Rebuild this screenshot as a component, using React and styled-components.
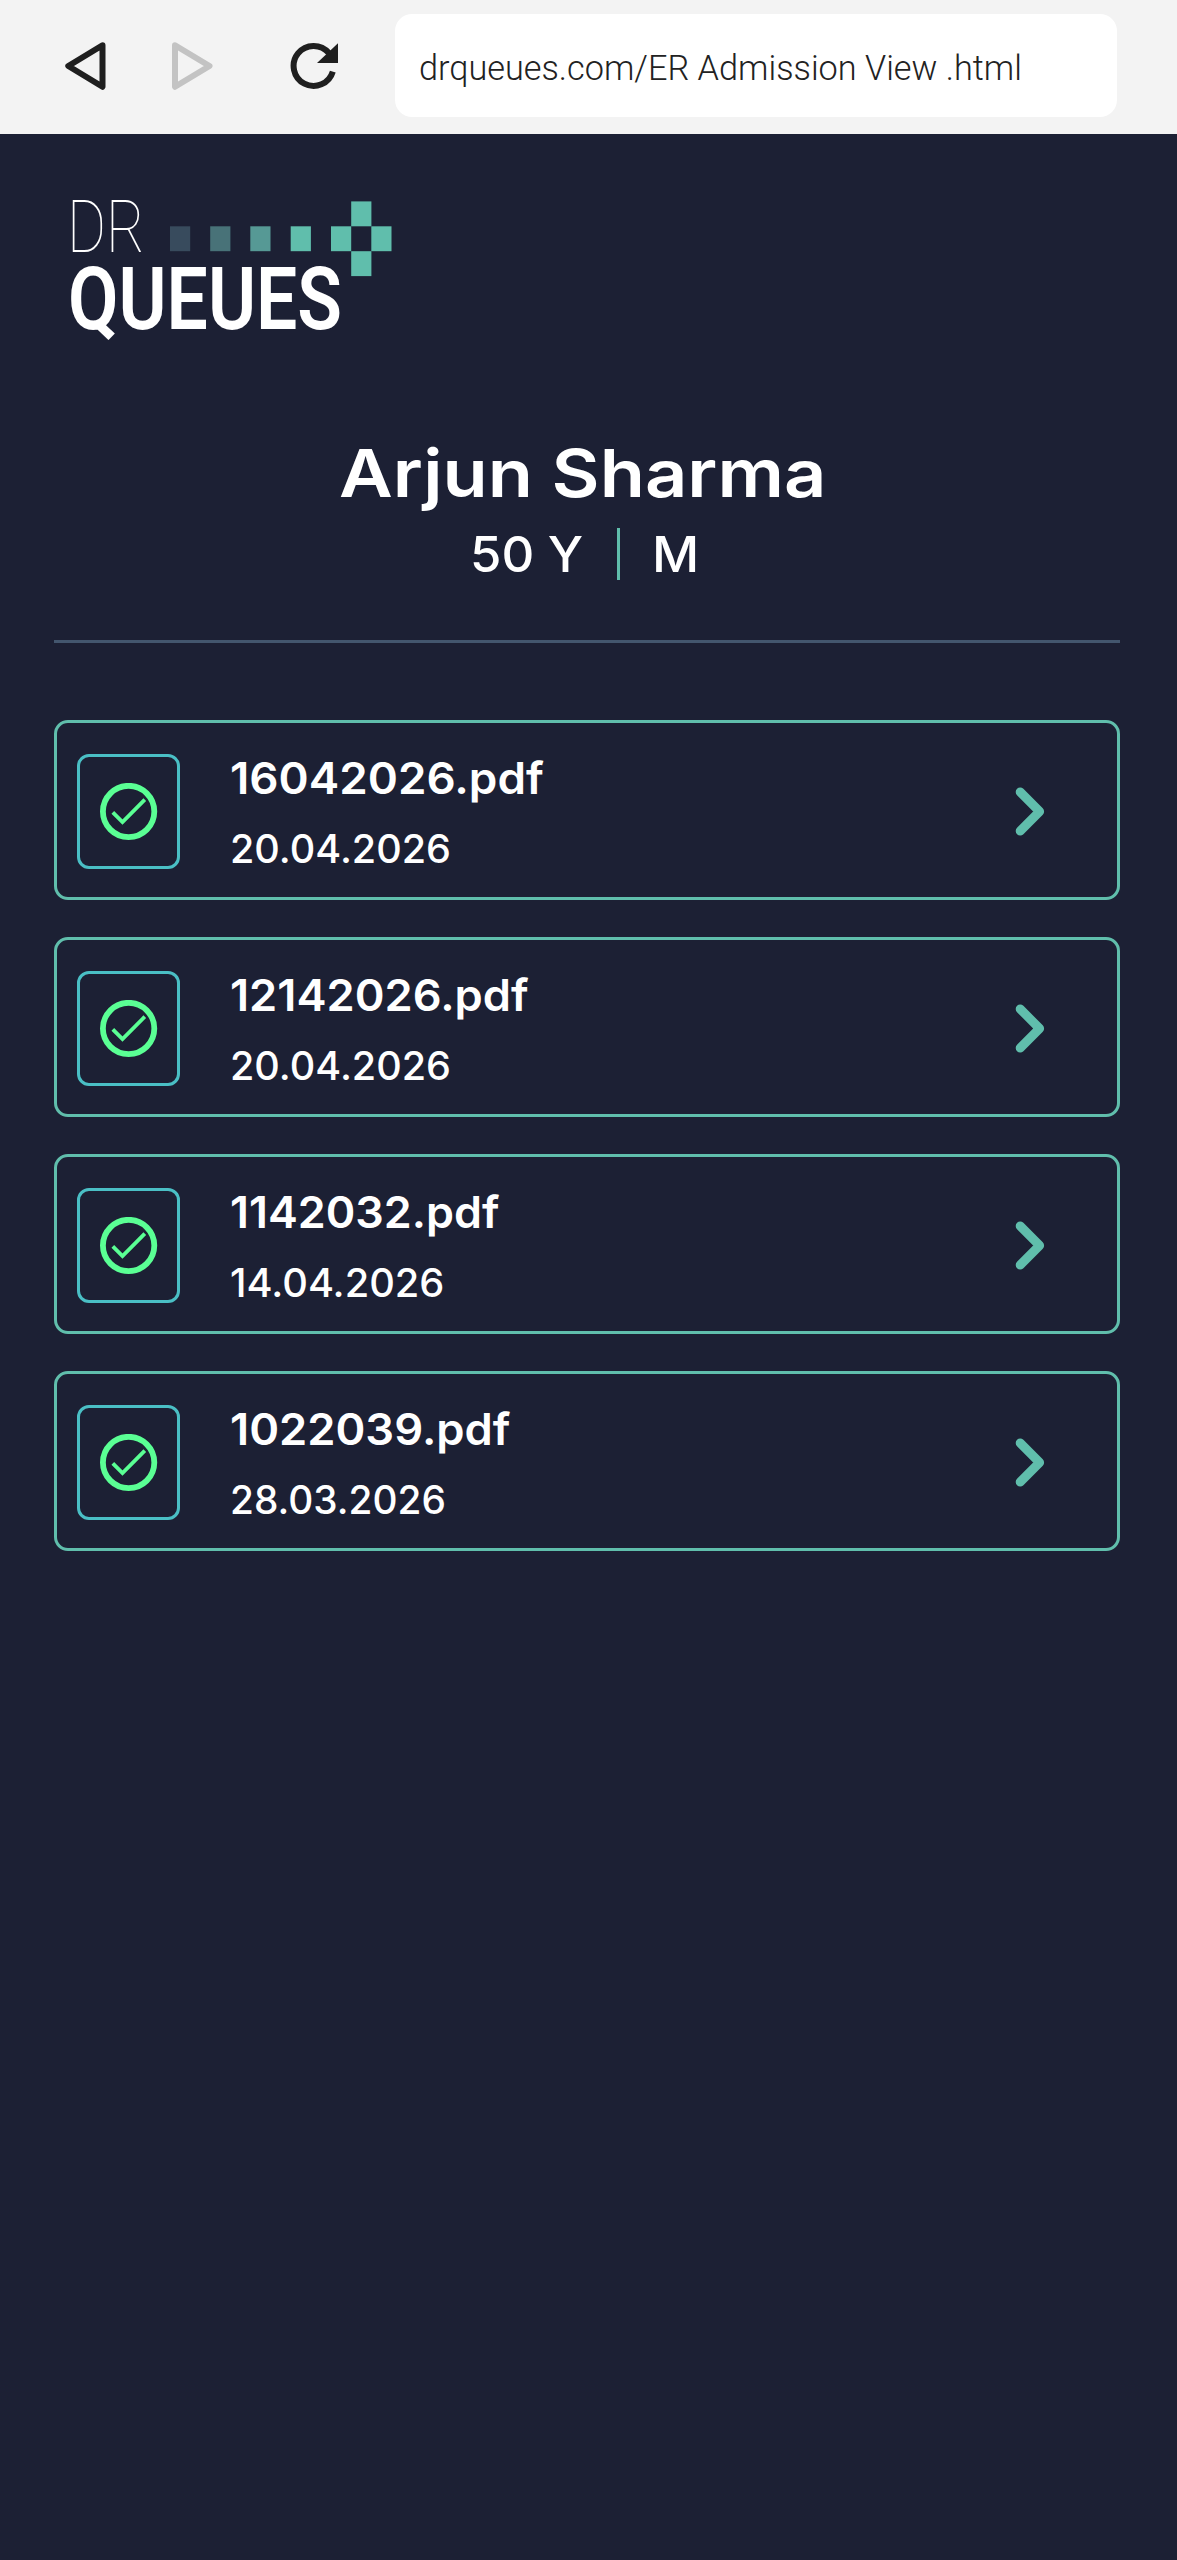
import { useLayoutEffect, useRef, useState } from "react";
import styled, { createGlobalStyle } from "styled-components";

const GlobalStyle = createGlobalStyle`
* {
    box-sizing: border-box;
}

body {
    margin: 0;
    background: #1c2034;
    font-family: "Inter", "Open Sans", sans-serif;
    color: #ffffff;
}
`

const Page = styled.div`
width: 1177px;
min-height: 2560px;
display: flex;
flex-direction: column;
background: #1c2034;
`

const BrowserBar = styled.div`
display: flex;
align-items: center;
height: 134px;
padding: 0 60px 3px 64px;
background: #f3f3f3;
`

const NavIcon = styled.svg`
flex: none;
width: ${({ $w }) => $w}px;
height: 52px;
margin-right: ${({ $gap }) => $gap}px;
`

const AddressBar = styled.div`
flex: 1;
display: flex;
align-items: center;
height: 103px;
padding: 4px 0 0 24px;
border-radius: 17px;
background: #ffffff;
color: #222222;
font-family: "Roboto", sans-serif;
font-size: 34.5px;
font-weight: 300;
`

const Content = styled.main`
display: flex;
flex-direction: column;
padding: 0 57px 0 54px;
`

const Logo = styled.svg`
display: block;
width: 340px;
height: 170px;
margin: 46px 0 0 6px;
font-family: "Roboto", sans-serif;
overflow: visible;
`

const Patient = styled.section`
display: flex;
flex-direction: column;
align-items: flex-start;
height: 293px;
padding-top: 83px;
border-bottom: 3px solid #43566e;
`

const Name = styled.h1`
margin: 0 0 0 285px;
font-size: 66px;
line-height: 80px;
font-weight: 600;
`

const Details = styled.div`
display: flex;
align-items: center;
margin: 15px 0 0 416px;
height: 52px;
font-size: 49.5px;
line-height: 50px;
font-weight: 450;
`

const Bar = styled.span`
width: 3px;
height: 52px;
margin: 0 32px 0 34px;
background: #60beac;
`

const FileList = styled.ul`
display: flex;
flex-direction: column;
gap: 37px;
margin: 77px 0 0;
padding: 0;
list-style: none;
`

const FileCard = styled.li`
display: flex;
align-items: center;
height: 180.1px;
padding: 3px 72px 0 20px;
border: 3px solid #60beac;
border-radius: 14px;
`

const StatusBox = styled.div`
display: flex;
align-items: center;
justify-content: center;
width: 103px;
height: 115px;
border: 3px solid #4abfc5;
border-radius: 12px;
`

const FileText = styled.div`
flex: 1;
display: flex;
flex-direction: column;
align-items: flex-start;
gap: 20px;
margin-left: 50px;
`

const FileName = styled.div`
font-size: 44px;
line-height: 54px;
font-weight: 600;
`

const FileDate = styled.div`
font-size: 39px;
line-height: 48px;
font-weight: 450;
`

const Stretch = styled.span`
display: block;
white-space: pre;
transform-origin: left center;
`

// stretches a line of text horizontally to the given width
const Fit = ({ width, children }) => {
    const ref = useRef(null)
    const [scale, setScale] = useState(1)

    useLayoutEffect(() => {
        setScale(width / ref.current.offsetWidth)
    }, [width, children])

    return (
        <Stretch ref={ref} style={{ transform: `scaleX(${scale})`, marginRight: width - width / scale }}>
            {children}
        </Stretch>
    )
}

const files = [
    { name: "16042026.pdf", nameWidth: 314, date: "20.04.2026", dateWidth: 221 },
    { name: "12142026.pdf", nameWidth: 299, date: "20.04.2026", dateWidth: 221 },
    { name: "1142032.pdf", nameWidth: 269, date: "14.04.2026", dateWidth: 214 },
    { name: "1022039.pdf", nameWidth: 280, date: "28.03.2026", dateWidth: 216 },
]

const CheckIcon = () => (
    <svg width="58" height="58" viewBox="0 0 58 58" fill="none" stroke="#5aff94">
        <circle cx="28.6" cy="28.5" r="25.7" strokeWidth="5.8" />
        <path d="M12.8 29.3L22.5 39L44.8 16.7" strokeWidth="3.8" />
    </svg>
)

const Chevron = () => (
    <svg width="30" height="50" viewBox="0 0 30 50" fill="none">
        <path d="M5.2 5L24.6 24.5L5.2 44" stroke="#60beac" strokeWidth="9" strokeLinecap="round" strokeLinejoin="round" />
    </svg>
)

const squares = [
    { x: 110, y: 46.3, fill: "#384b5d" },
    { x: 150.2, y: 46.3, fill: "#487278" },
    { x: 190.3, y: 46.3, fill: "#569995" },
    { x: 230.7, y: 46.3, fill: "#60beac" },
    { x: 271, y: 46.3, fill: "#60beac" },
    { x: 311.3, y: 46.3, fill: "#60beac" },
    { x: 291.2, y: 21.4, fill: "#60beac" },
    { x: 291.2, y: 71.2, fill: "#60beac" },
]

const App = () => {
    return (
        <>
            <GlobalStyle />
            <Page>
                <BrowserBar>
                    <NavIcon $w={44} $gap={62} viewBox="0 0 44 52" fill="none">
                        <path d="M38.5 5.2L4.3 26L38.5 46.8Z" stroke="#1f1f1f" strokeWidth="6" strokeLinejoin="round" />
                    </NavIcon>
                    <NavIcon $w={44} $gap={75} viewBox="0 0 44 52" fill="none">
                        <path d="M5 5.2L39.5 26L5 46.8Z" stroke="#c3c3c3" strokeWidth="6" strokeLinejoin="round" />
                    </NavIcon>
                    <NavIcon $w={50} $gap={56} viewBox="0 0 50 52" fill="none">
                        <path d="M39.9 13A20 20 0 1 0 43.8 31.6" stroke="#1f1f1f" strokeWidth="6" />
                        <path d="M49 3.2V23H28Z" fill="#1f1f1f" />
                    </NavIcon>
                    <AddressBar>
                        <Fit width={603}>drqueues.com/ER Admission View .html</Fit>
                    </AddressBar>
                </BrowserBar>
                <Content>
                    <Logo viewBox="0 0 340 170" fill="#ffffff">
                        <text x="7" y="71.5" fontSize="72" fontWeight="260" textLength="78" lengthAdjust="spacingAndGlyphs">DR</text>
                        <text x="8" y="149" fontSize="87" fontWeight="640" textLength="274" lengthAdjust="spacingAndGlyphs">QUEUES</text>
                        {squares.map((s) => (
                            <rect key={`${s.x}-${s.y}`} x={s.x} y={s.y} width="20.2" height="24.9" fill={s.fill} />
                        ))}
                    </Logo>
                    <Patient>
                        <Name>
                            <Fit width={487}>Arjun Sharma</Fit>
                        </Name>
                        <Details>
                            <Fit width={113}>50 Y</Fit>
                            <Bar />
                            <Fit width={47}>M</Fit>
                        </Details>
                    </Patient>
                    <FileList>
                        {files.map((file) => (
                            <FileCard key={file.name}>
                                <StatusBox>
                                    <CheckIcon />
                                </StatusBox>
                                <FileText>
                                    <FileName>
                                        <Fit width={file.nameWidth}>{file.name}</Fit>
                                    </FileName>
                                    <FileDate>
                                        <Fit width={file.dateWidth}>{file.date}</Fit>
                                    </FileDate>
                                </FileText>
                                <Chevron />
                            </FileCard>
                        ))}
                    </FileList>
                </Content>
            </Page>
        </>
    )
}

export default App
